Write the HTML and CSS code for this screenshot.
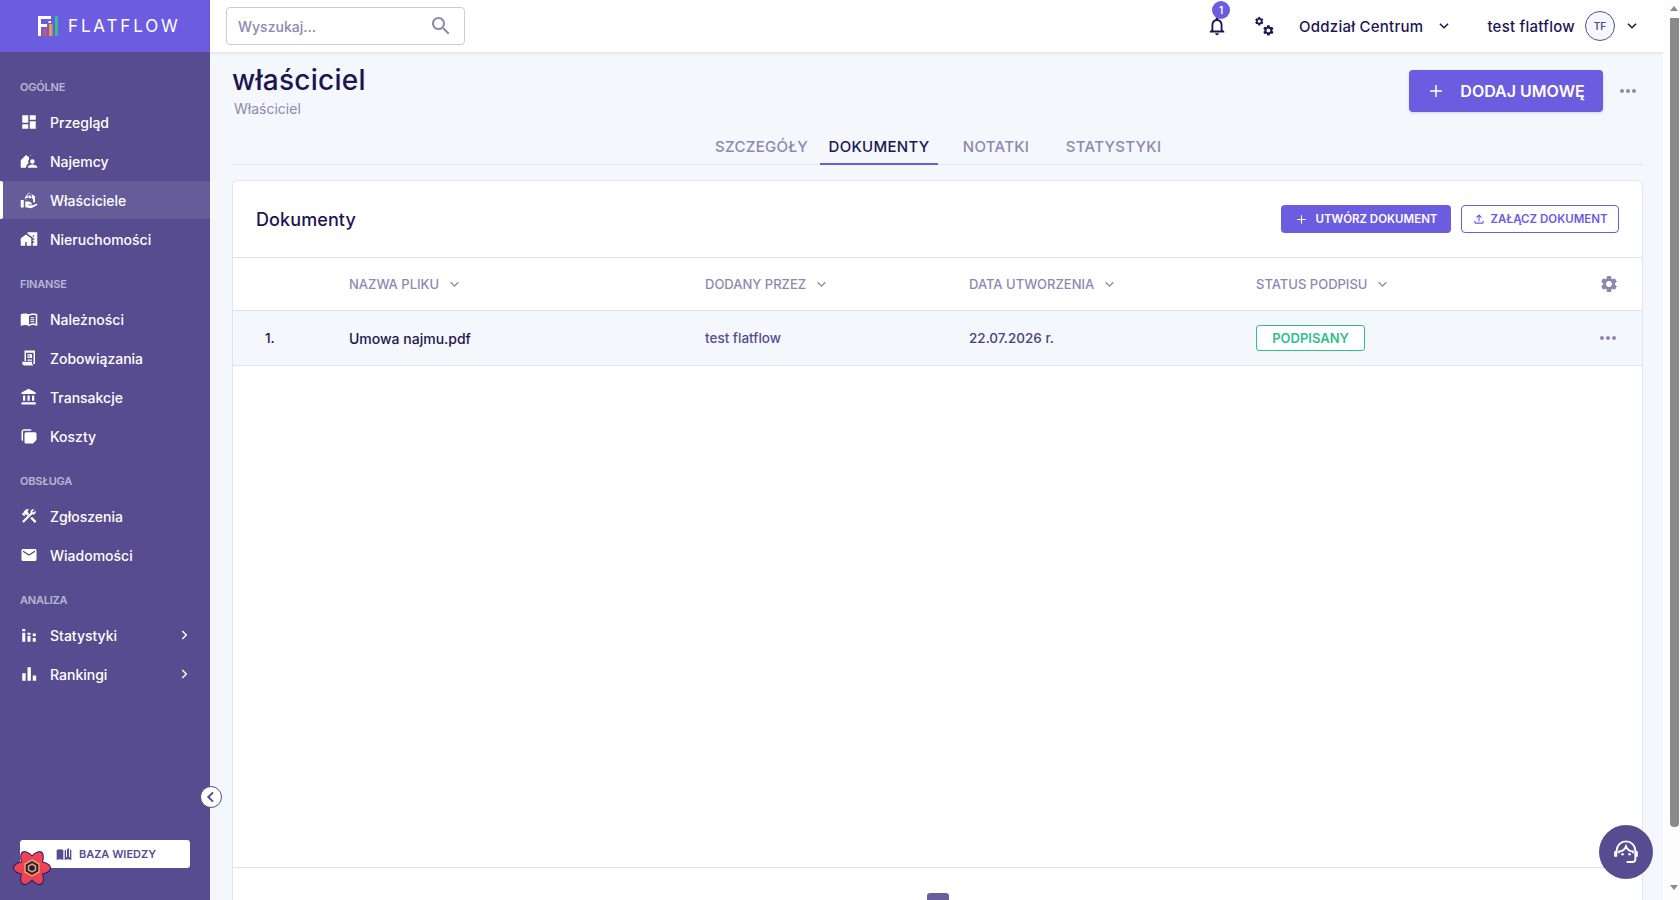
FILE: index.html
```html
<!DOCTYPE html>
<html lang="pl">
<head>
<meta charset="utf-8">
<title>FlatFlow</title>
<link rel="stylesheet" href="styles.css">
</head>
<body>
<div class="app">
  <aside class="sidebar">
    <div class="brand">
      <svg class="logo" viewBox="0 0 20 20"><path class="logo-w" d="M0 0h13v3H3v5h6v3H3v9H0z"/><path class="logo-w" d="M10.5 5H13v2h-2.500z"/><rect class="logo-r" x="5.500" y="13" width="3" height="7"/><rect class="logo-o" x="11" y="8" width="3.500" height="12"/><rect class="logo-g" x="17" y="0" width="3" height="20"/></svg>
      <span class="brand-name">FLATFLOW</span>
    </div>
    <nav class="nav">
      <div class="nav-label">OGÓLNE</div>
      <a class="nav-item"><svg class="nav-ico" viewBox="0 0 24 24"><path d="M3 13h8V3H3v10zm0 8h8v-6H3v6zm10 0h8V11h-8v10zm0-18v6h8V3h-8z"/></svg><span>Przegląd</span></a>
      <a class="nav-item"><svg class="nav-ico" viewBox="0 0 24 24"><path d="M1 21V11l7-7 4 3v2.500A4.500 4.500 0 0 0 11.500 15 8 8 0 0 0 8 20v1zM13 4l1.500 1.200V4zM16.500 9.500a3 3 0 1 1 0 6 3 3 0 0 1 0-6zM10.500 21v-1c0-2 3.500-3.500 6-3.500s6.500 1.500 6.500 3.500v1z"/></svg><span>Najemcy</span></a>
      <a class="nav-item active"><svg class="nav-ico" viewBox="0 0 24 24"><path d="M12 2l8 5v8h-2.500v-3.500A5 5 0 0 0 15 8.500 3 3 0 1 0 11 8.500 5 5 0 0 0 7 12V7.500zM13 5.500a2 2 0 1 1 0 4 2 2 0 0 1 0-4zM1 12h4v10H1zM7 14h5l3 1.500c1.500.7 1 2.500-.5 2.500H11v1h6l5-2c1.200-.3 1.500 1.500.5 2L15 23l-8-1.500z"/></svg><span>Właściciele</span></a>
      <a class="nav-item"><svg class="nav-ico" viewBox="0 0 24 24"><path d="M1 11v10h6v-5h2v5h6V11L8 6z"/><path d="M10 3v1.970l7 5V11h2v2h-2v2h2v2h-2v4h6V3H10zm9 6h-2V7h2v2z"/></svg><span>Nieruchomości</span></a>

      <div class="nav-label spaced">FINANSE</div>
      <a class="nav-item"><svg class="nav-ico" viewBox="0 0 24 24"><path d="M21 5c-1.110-.35-2.330-.5-3.500-.5-1.950 0-4.050.4-5.500 1.500-1.450-1.100-3.550-1.500-5.500-1.500S2.450 4.900 1 6v14.650c0 .25.25.5.5.5.1 0 .15-.05.25-.05C3.100 20.450 5.050 20 6.500 20c1.950 0 4.050.4 5.500 1.500 1.350-.85 3.800-1.500 5.500-1.500 1.650 0 3.350.3 4.750 1.050.1.05.15.05.25.05.25 0 .5-.25.5-.5V6c-.6-.45-1.250-.75-2-1zm0 13.500c-1.100-.35-2.300-.5-3.500-.5-1.700 0-4.150.65-5.500 1.500V8c1.350-.85 3.800-1.500 5.500-1.500 1.200 0 2.400.15 3.500.5v11.500z"/><path d="M14 9.500h5V11h-5zM14 12.200h5v1.500h-5zM14 14.900h5v1.500h-5z"/></svg><span>Należności</span></a>
      <a class="nav-item"><svg class="nav-ico" viewBox="0 0 24 24"><path d="M6 2h14v18h-2.500v-1.500H18V5H8v11H6zM10 7h6v5h-6zM11.500 8.500v2H13v-2zM10 14h6v1.500h-6zM3 17h13v2c0 1 .5 2 1.500 2.500a1 1 0 0 1 0 .5H6c-2 0-3-1.500-3-3z"/></svg><span>Zobowiązania</span></a>
      <a class="nav-item"><svg class="nav-ico" viewBox="0 0 24 24"><path d="M4 10v7h3v-7H4zm6 0v7h3v-7h-3zM2 22h19v-3H2v3zm14-12v7h3v-7h-3zm-4.500-9L2 6v2h19V6l-9.500-5z"/></svg><span>Transakcje</span></a>
      <a class="nav-item"><svg class="nav-ico" viewBox="0 0 24 24"><path d="M8 7h12a2 2 0 0 1 2 2v8l-5 5H8a2 2 0 0 1-2-2V9a2 2 0 0 1 2-2z"/><path d="M17 22v-4a1 1 0 0 1 1-1h4"/><path d="M2 6.500C2 4.500 3.500 3 5.500 3H15v2H5.500C4.500 5 4 5.800 4 6.500V19c-1.300-.5-2-1.500-2-3z"/></svg><span>Koszty</span></a>

      <div class="nav-label spaced">OBSŁUGA</div>
      <a class="nav-item"><svg class="nav-ico" viewBox="0 0 24 24"><path d="M13.783 15.172l2.121-2.121 5.996 5.996-2.121 2.121z"/><path d="M17.500 10c1.930 0 3.500-1.570 3.500-3.500 0-.58-.16-1.120-.41-1.600l-2.700 2.700-1.490-1.490 2.700-2.700c-.48-.25-1.020-.41-1.600-.41C15.570 3 14 4.570 14 6.500c0 .41.08.8.21 1.160l-1.850 1.850-1.780-1.780.71-.71-1.410-1.410L12 3.490c-1.170-1.170-3.070-1.170-4.240 0L4.220 7.030l1.410 1.410H2.810l-.71.71 3.540 3.540.71-.71V9.150l1.410 1.410.71-.71 1.780 1.780-7.410 7.410 2.120 2.120L16.340 9.790c.36.13.75.21 1.160.21z"/></svg><span>Zgłoszenia</span></a>
      <a class="nav-item"><svg class="nav-ico" viewBox="0 0 24 24"><path d="M20 4H4c-1.100 0-1.990.9-1.990 2L2 18c0 1.100.9 2 2 2h16c1.100 0 2-.9 2-2V6c0-1.100-.9-2-2-2zm0 4l-8 5-8-5V6l8 5 8-5v2z"/></svg><span>Wiadomości</span></a>

      <div class="nav-label spaced">ANALIZA</div>
      <a class="nav-item"><svg class="nav-ico" viewBox="0 0 24 24"><path d="M3 9h4v12H3zM3 4h4v3H3zM10 13h4v8h-4zM10 9h4v2.500h-4zM17 16h4v5h-4zM17 10h4v3.500h-4z"/></svg><span>Statystyki</span><svg class="nav-arrow" viewBox="0 0 24 24"><path d="M9 5l7 7-7 7"/></svg></a>
      <a class="nav-item"><svg class="nav-ico" viewBox="0 0 24 24"><path d="M3 11h4.500v10H3zM10 3h4.500v18H10zM17 14h4.500v7H17z"/></svg><span>Rankingi</span><svg class="nav-arrow" viewBox="0 0 24 24"><path d="M9 5l7 7-7 7"/></svg></a>
    </nav>
    <div class="side-foot">
      <button class="kb-btn"><svg class="kb-ico" viewBox="0 0 24 24"><path d="M1 6c2.500-1.500 7-1.800 10 0v15c-3-1.500-7.500-1.500-10 0z"/><path d="M13 6.500V21c2.500-1.500 6.500-1.500 10 0V6c-.8-.5-1.500-.7-2-.8v11.300h-1.500V3l-3 2v10.700L15 17V6z"/></svg>BAZA WIEDZY</button>
    </div>
    <button class="collapse"><svg viewBox="0 0 24 24"><path d="M15 5l-7 7 7 7"/></svg></button>
    <svg class="devtools" viewBox="0 0 40 38">
      <g class="dt-petals">
        <ellipse cx="20" cy="19" rx="19" ry="8" transform="rotate(0 20 19)"/>
        <ellipse cx="20" cy="19" rx="19" ry="8" transform="rotate(60 20 19)"/>
        <ellipse cx="20" cy="19" rx="19" ry="8" transform="rotate(120 20 19)"/>
      </g>
      <g class="dt-fill">
        <ellipse cx="20" cy="19" rx="18" ry="7" transform="rotate(0 20 19)"/>
        <ellipse cx="20" cy="19" rx="18" ry="7" transform="rotate(60 20 19)"/>
        <ellipse cx="20" cy="19" rx="18" ry="7" transform="rotate(120 20 19)"/>
      </g>
      <path class="dt-hex" d="M20 11l7 4v8l-7 4-7-4v-8z"/>
      <path class="dt-hex2" d="M20 15l3.500 2v4l-3.500 2-3.500-2v-4z"/>
    </svg>
  </aside>

  <div class="main">
    <header class="topbar">
      <div class="search">
        <span>Wyszukaj...</span>
        <svg class="search-ico" viewBox="0 0 24 24"><path d="M15.500 14h-.79l-.28-.27C15.410 12.590 16 11.110 16 9.500 16 5.910 13.090 3 9.500 3S3 5.910 3 9.500 5.910 16 9.500 16c1.610 0 3.090-.59 4.230-1.570l.27.28v.79l5 4.990L20.490 19l-4.990-5zm-6 0C7.010 14 5 11.990 5 9.500S7.010 5 9.500 5 14 7.010 14 9.500 11.990 14 9.500 14z"/></svg>
      </div>
      <div class="top-right">
        <div class="bell">
          <svg class="bell-ico" viewBox="0 0 24 24"><path d="M12 22c1.100 0 2-.9 2-2h-4c0 1.100.89 2 2 2zm6-6v-5c0-3.070-1.640-5.640-4.500-6.320V4c0-.83-.67-1.500-1.500-1.500s-1.500.67-1.500 1.500v.68C7.630 5.360 6 7.920 6 11v5l-2 2v1h16v-1l-2-2zm-2 1H8v-6c0-2.480 1.510-4.500 4-4.500s4 2.020 4 4.500v6z"/></svg>
          <span class="bell-badge">1</span>
        </div>
        <svg class="gears" viewBox="0 0 24 24">
          <g transform="translate(0 0) scale(.5)"><path d="M19.140 12.940c.04-.3.06-.61.06-.94 0-.32-.02-.64-.07-.94l2.030-1.580c.18-.14.23-.41.12-.61l-1.920-3.320c-.12-.22-.37-.29-.59-.22l-2.390.96c-.5-.38-1.030-.7-1.620-.94l-.36-2.540c-.04-.24-.24-.41-.48-.41h-3.840c-.24 0-.43.17-.47.41l-.36 2.540c-.59.24-1.130.57-1.620.94l-2.390-.96c-.22-.08-.47 0-.59.22L2.740 8.870c-.12.21-.08.47.12.61l2.030 1.580c-.05.3-.09.63-.09.94s.02.64.07.94l-2.030 1.580c-.18.14-.23.41-.12.61l1.920 3.320c.12.22.37.29.59.22l2.390-.96c.5.38 1.030.7 1.620.94l.36 2.540c.05.24.24.41.48.41h3.840c.24 0 .44-.17.47-.41l.36-2.540c.59-.24 1.130-.56 1.620-.94l2.390.96c.22.08.47 0 .59-.22l1.920-3.320c.12-.22.07-.47-.12-.61l-2.010-1.580zM12 15.600c-1.980 0-3.600-1.620-3.600-3.600s1.620-3.600 3.600-3.600 3.600 1.620 3.600 3.600-1.620 3.600-3.600 3.600z"/></g>
          <g transform="translate(9 9) scale(.62)"><path d="M19.140 12.940c.04-.3.06-.61.06-.94 0-.32-.02-.64-.07-.94l2.030-1.580c.18-.14.23-.41.12-.61l-1.920-3.320c-.12-.22-.37-.29-.59-.22l-2.390.96c-.5-.38-1.030-.7-1.620-.94l-.36-2.540c-.04-.24-.24-.41-.48-.41h-3.840c-.24 0-.43.17-.47.41l-.36 2.540c-.59.24-1.130.57-1.620.94l-2.390-.96c-.22-.08-.47 0-.59.22L2.740 8.870c-.12.21-.08.47.12.61l2.030 1.580c-.05.3-.09.63-.09.94s.02.64.07.94l-2.030 1.580c-.18.14-.23.41-.12.61l1.920 3.320c.12.22.37.29.59.22l2.390-.96c.5.38 1.030.7 1.620.94l.36 2.540c.05.24.24.41.48.41h3.840c.24 0 .44-.17.47-.41l.36-2.540c.59-.24 1.130-.56 1.620-.94l2.390.96c.22.08.47 0 .59-.22l1.920-3.320c.12-.22.07-.47-.12-.61l-2.010-1.580zM12 15.600c-1.980 0-3.600-1.620-3.600-3.600s1.620-3.600 3.600-3.600 3.600 1.620 3.600 3.600-1.620 3.600-3.600 3.600z"/></g>
        </svg>
        <span class="top-branch">Oddział Centrum</span>
        <svg class="top-chev" viewBox="0 0 24 24"><path d="M5 8l7 7 7-7"/></svg>
        <span class="top-user">test flatflow</span>
        <span class="avatar">TF</span>
        <svg class="top-chev" viewBox="0 0 24 24"><path d="M5 8l7 7 7-7"/></svg>
      </div>
    </header>

    <main class="content">
      <div class="page-head">
        <div class="titles">
          <h1 class="page-title">właściciel</h1>
          <div class="page-sub">Właściciel</div>
        </div>
        <div class="page-actions">
          <button class="add-btn"><svg class="add-ico" viewBox="0 0 24 24"><path d="M12 4v16M4 12h16"/></svg>DODAJ UMOWĘ</button>
          <span class="dots head-dots"><i></i><i></i><i></i></span>
        </div>
      </div>

      <div class="tabs">
        <div class="tab">SZCZEGÓŁY</div>
        <div class="tab current">DOKUMENTY</div>
        <div class="tab">NOTATKI</div>
        <div class="tab">STATYSTYKI</div>
      </div>

      <section class="card">
        <div class="card-head">
          <h2 class="card-title">Dokumenty</h2>
          <div class="card-actions">
            <button class="btn-solid"><svg class="btn-plus" viewBox="0 0 24 24"><path d="M12 4v16M4 12h16"/></svg>UTWÓRZ DOKUMENT</button>
            <button class="btn-line"><svg class="btn-up" viewBox="0 0 24 24"><path d="M18 15v3H6v-3H4v3c0 1.100.9 2 2 2h12c1.100 0 2-.9 2-2v-3h-2zM7 9l1.410 1.410L11 7.830V16h2V7.830l2.590 2.580L17 9l-5-5-5 5z"/></svg>ZAŁĄCZ DOKUMENT</button>
          </div>
        </div>
        <div class="t-row t-head">
          <div></div>
          <div class="th">NAZWA PLIKU<svg class="th-chev" viewBox="0 0 24 24"><path d="M5 8l7 7 7-7"/></svg></div>
          <div class="th">DODANY PRZEZ<svg class="th-chev" viewBox="0 0 24 24"><path d="M5 8l7 7 7-7"/></svg></div>
          <div class="th">DATA UTWORZENIA<svg class="th-chev" viewBox="0 0 24 24"><path d="M5 8l7 7 7-7"/></svg></div>
          <div class="th">STATUS PODPISU<svg class="th-chev" viewBox="0 0 24 24"><path d="M5 8l7 7 7-7"/></svg></div>
          <svg class="th-gear" viewBox="0 0 24 24"><path d="M19.140 12.940c.04-.3.06-.61.06-.94 0-.32-.02-.64-.07-.94l2.030-1.580c.18-.14.23-.41.12-.61l-1.920-3.320c-.12-.22-.37-.29-.59-.22l-2.390.96c-.5-.38-1.030-.7-1.620-.94l-.36-2.540c-.04-.24-.24-.41-.48-.41h-3.840c-.24 0-.43.17-.47.41l-.36 2.540c-.59.24-1.130.57-1.620.94l-2.390-.96c-.22-.08-.47 0-.59.22L2.740 8.870c-.12.21-.08.47.12.61l2.030 1.580c-.05.3-.09.63-.09.94s.02.64.07.94l-2.030 1.580c-.18.14-.23.41-.12.61l1.920 3.320c.12.22.37.29.59.22l2.390-.96c.5.38 1.030.7 1.620.94l.36 2.540c.05.24.24.41.48.41h3.840c.24 0 .44-.17.47-.41l.36-2.540c.59-.24 1.130-.56 1.620-.94l2.390.96c.22.08.47 0 .59-.22l1.920-3.320c.12-.22.07-.47-.12-.61l-2.010-1.580zM12 15.600c-1.980 0-3.600-1.620-3.600-3.600s1.620-3.600 3.600-3.600 3.600 1.620 3.600 3.600-1.620 3.600-3.600 3.600z"/></svg>
        </div>
        <div class="t-row t-body">
          <div class="td-num">1.</div>
          <div class="td-name">Umowa najmu.pdf</div>
          <div class="td-user">test flatflow</div>
          <div class="td-date">22.07.2026 r.</div>
          <div><span class="badge">PODPISANY</span></div>
          <span class="dots row-dots"><i></i><i></i><i></i></span>
        </div>
        <div class="t-empty"></div>
        <div class="t-foot"><span class="page-chip"></span></div>
      </section>
    </main>
  </div>

  <div class="scrollbar">
    <span class="sb-up"></span>
    <span class="sb-thumb"></span>
    <span class="sb-down"></span>
  </div>

  <button class="fab"><svg viewBox="0 0 24 24"><path class="fab-s" d="M4.500 12.500V11a7.500 7.500 0 0 1 15 0v6.500a2.500 2.500 0 0 1-2.500 2.500h-4.500"/><path class="fab-s" d="M6.500 13V11.500C9 11.500 11 10 12 7.500c1 2.500 3 4 5.500 4V13"/><rect x="2.500" y="11" width="2.500" height="5" rx="1.200"/><rect x="19" y="11" width="2.500" height="5" rx="1.200"/><circle cx="9.200" cy="13.800" r="1"/><circle cx="14.800" cy="13.800" r="1"/></svg></button>
</div>
</body>
</html>
```

FILE: styles.css
```css
* { box-sizing: border-box; }
html, body { margin: 0; height: 900px; overflow: hidden; }
body { font-family: Inter, "Noto Sans", sans-serif; color: #1d1552; background: #f4f7fb; }
h1, h2 { margin: 0; font-weight: 500; }
button { font-family: inherit; border: 0; cursor: pointer; }

.app { display: flex; height: 900px; position: relative; }

/* sidebar */
.sidebar { width: 210px; flex: none; display: flex; flex-direction: column; background: #574c8f; position: relative; color: #fff; }
.brand { height: 52px; flex: none; display: flex; align-items: center; gap: 10px; padding-left: 38px; background: #6c5ce0; }
.logo { width: 20px; height: 20px; }
.logo-w { fill: #fff; }
.logo-r { fill: #e8504c; }
.logo-o { fill: #e39a4e; }
.logo-g { fill: #2fc28f; }
.brand-name { font-size: 17px; font-weight: 400; letter-spacing: 2.85px; }
.nav { padding-top: 25px; }
.nav-label { height: 20px; line-height: 20px; margin: 0 0 6px; padding-left: 20px; font-size: 11px; font-weight: 600; letter-spacing: -.2px; color: rgba(255,255,255,.6); }
.nav-label.spaced { margin-top: 16px; }
.nav-item { display: flex; align-items: center; height: 38px; margin: 1px 0; padding: 0 20px; font-size: 14px; font-weight: 500; position: relative; }
.nav-item.active { background: #665c9a; }
.nav-item.active::before { content: ""; position: absolute; left: 0; top: 0; bottom: 0; width: 3px; background: #fff; border-radius: 0 2px 2px 0; }
.nav-ico { width: 18px; height: 18px; margin-right: 12px; flex: none; fill: #fff; }
.nav-arrow { width: 14px; height: 14px; margin-left: auto; margin-right: -1px; fill: none; stroke: #fff; stroke-width: 2.400; }
.side-foot { margin-top: auto; padding: 0 20px 32px; }
.kb-btn { width: 170px; height: 28px; display: flex; align-items: center; justify-content: center; gap: 7px; padding-left: 8px; background: #fff; border-radius: 3px; color: #574c8f; font-size: 11px; font-weight: 600; }
.kb-ico { width: 16px; height: 16px; fill: #574c8f; }
.collapse { position: absolute; left: 200px; top: 786px; width: 22px; height: 22px; padding: 0; border-radius: 50%; background: #fff; border: 1px solid #574c8f; display: flex; align-items: center; justify-content: center; }
.collapse svg { width: 16px; height: 16px; fill: none; stroke: #574c8f; stroke-width: 3; }
.devtools { position: absolute; left: 12px; top: 849px; width: 40px; height: 38px; }
.dt-petals { fill: #1f1a55; }
.dt-fill { fill: #f0405a; }
.dt-hex { fill: #1f1a55; stroke: #e5a94a; stroke-width: 1.500; }
.dt-hex2 { fill: none; stroke: #e5a94a; stroke-width: 1.500; }

/* main */
.main { flex: 1; min-width: 0; display: flex; flex-direction: column; }
.topbar { height: 52px; flex: none; display: flex; align-items: center; justify-content: space-between; padding: 0 24px 0 16px; background: #fff; box-shadow: 0 1px 3px rgba(40,30,100,.12); position: relative; }
.search { width: 239px; height: 38px; display: flex; align-items: center; justify-content: space-between; padding: 0 11px; border: 1px solid #cdc9e0; border-radius: 4px; font-size: 14px; font-weight: 500; color: #8e88b0; }
.search-ico { width: 24px; height: 24px; fill: #8e88b0; }
.top-right { display: flex; align-items: center; font-size: 15px; font-weight: 500; }
.bell { position: relative; width: 22px; height: 22px; margin-right: 26px; }
.bell-ico { width: 22px; height: 22px; fill: #1d1552; display: block; }
.bell-badge { position: absolute; left: 6px; top: -14px; width: 18px; height: 18px; border-radius: 50%; background: #6c5ce0; color: #fff; font-size: 10px; font-weight: 600; text-align: center; line-height: 18px; }
.gears { width: 21px; height: 21px; fill: #1d1552; margin-right: 24px; }
.top-branch { letter-spacing: .25px; }
.top-chev { width: 14px; height: 14px; margin-left: 14px; fill: none; stroke: #1d1552; stroke-width: 2.600; }
.top-user { margin-left: 36px; letter-spacing: .25px; }
.avatar { width: 30px; height: 30px; margin-left: 10px; margin-right: -4px; border-radius: 50%; border: 1px solid #574c8f; background: #f4f7fb; display: flex; align-items: center; justify-content: center; font-size: 10px; font-weight: 600; color: #574c8f; }

.content { flex: 1; min-height: 0; padding: 0 20px 0 22px; }
.page-head { height: 80px; display: flex; justify-content: space-between; align-items: flex-start; }
.titles { padding-top: 10px; }
.page-title { font-size: 28px; line-height: 36px; letter-spacing: .25px; color: #1d1552; }
.page-sub { padding-left: 2px; margin-top: 1px; font-size: 14px; line-height: 20px; color: #8e88b0; }
.page-actions { display: flex; align-items: center; padding-top: 18px; }
.add-btn { width: 194px; height: 42px; display: flex; align-items: center; justify-content: center; gap: 15px; border-radius: 4px; background: #6c5ce0; color: #fff; font-size: 16px; font-weight: 600; box-shadow: 0 1px 3px rgba(40,30,100,.15); }
.add-ico { width: 18px; height: 18px; fill: none; stroke: #fff; stroke-width: 2; }
.dots { display: inline-flex; gap: 2px; }
.dots i { width: 4px; height: 4px; border-radius: 50%; background: #8e88b0; }
.head-dots { margin-left: 17px; margin-right: 7px; }

.tabs { height: 33px; display: grid; grid-template-columns: 109px 118px 108px 119px; column-gap: 4px; justify-content: center; padding-left: 5px; border-bottom: 1px solid #e2e2ee; }
.tab { height: 33px; line-height: 30px; text-align: center; font-size: 15px; font-weight: 500; letter-spacing: .3px; color: #8e88b0; }
.tab.current { color: #1d1552; border-bottom: 2px solid #6c5ce0; }

.card { margin-top: 15px; background: #fff; border: 1px solid #e4e4f0; border-radius: 6px 6px 0 0; }
.card-head { height: 76px; display: flex; align-items: center; justify-content: space-between; padding: 0 23px; }
.card-title { font-size: 18px; letter-spacing: .1px; }
.card-actions { display: flex; gap: 10px; }
.btn-solid, .btn-line { height: 28px; display: flex; align-items: center; justify-content: center; border-radius: 4px; font-size: 11.500px; font-weight: 600; }
.btn-solid { width: 170px; gap: 8px; background: #6c5ce0; color: #fff; }
.btn-plus { width: 13px; height: 13px; fill: none; stroke: #fff; stroke-width: 2; }
.btn-line { width: 158px; gap: 4px; background: #fff; color: #6c5ce0; border: 1px solid #6c5ce0; }
.btn-up { width: 14px; height: 14px; fill: #6c5ce0; }

.t-row { display: grid; grid-template-columns: 116px 356px 264px 287px 1fr auto; align-items: center; border-top: 1px solid #e2e2ee; padding-right: 25px; }
.t-head { height: 53px; }
.t-body { height: 56px; background: #f4f7fb; border-bottom: 1px solid #e2e2ee; }
.th { display: flex; align-items: center; gap: 9px; font-size: 13px; font-weight: 500; color: #8e88b0; }
.th-chev { width: 13px; height: 13px; fill: none; stroke: #8e88b0; stroke-width: 2.600; }
.th-gear { width: 20px; height: 20px; margin-right: -2px; fill: #8e88b0; }
.td-num { padding-left: 32px; font-size: 13.500px; font-weight: 500; color: #1d1552; }
.td-name { font-size: 14px; font-weight: 500; color: #1d1552; }
.td-user { font-size: 13.500px; font-weight: 500; color: #574c8f; }
.td-date { font-size: 13.500px; font-weight: 500; color: #4a4080; }
.badge { display: inline-flex; align-items: center; justify-content: center; width: 109px; height: 26px; border: 1px solid #2fbf8e; border-radius: 3px; background: #fff; font-size: 13px; font-weight: 600; color: #2fbf8e; }
.row-dots { margin-right: 1px; }

.t-empty { height: 502px; border-bottom: 1px solid #e2e2ee; }
.t-foot { display: flex; justify-content: center; padding: 25px 0 30px; }
.page-chip { width: 22px; height: 30px; border-radius: 3px; background: #6a609d; }

/* fake scrollbar */
.scrollbar { width: 17px; flex: none; display: flex; flex-direction: column; align-items: center; background: #fdfdfd; position: relative; padding-left: 5px; }
.sb-up { margin-top: 6px; border: 4.500px solid transparent; border-top: 0; border-bottom: 5px solid #8a8a8a; }
.sb-thumb { width: 9px; height: 809px; margin-top: 7px; border-radius: 0 0 4px 4px; background: #8a8a8a; }
.sb-down { margin-top: 58px; border: 4.500px solid transparent; border-bottom: 0; border-top: 5px solid #8a8a8a; }

.fab { position: absolute; left: 1599px; top: 825px; width: 54px; height: 54px; padding: 0; border-radius: 50%; background: #574c8f; display: flex; align-items: center; justify-content: center; }
.fab svg { width: 30px; height: 30px; fill: #fff; }
.fab-s { fill: none; stroke: #fff; stroke-width: 1.500; }
```
